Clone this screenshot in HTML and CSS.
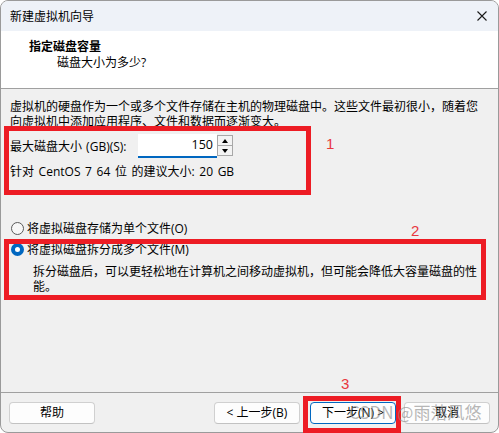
FILE: index.html
```html
<!DOCTYPE html>
<html lang="zh-CN">
<head>
<meta charset="utf-8">
<title>新建虚拟机向导</title>
<link rel="stylesheet" href="styles.css">
</head>
<body>
<div class="page">
  <div class="window">
    <div class="titlebar">
      <span class="title">新建虚拟机向导</span>
      <svg class="close" width="10" height="10" viewBox="0 0 10 10"><path d="M0.5 0.5L9.5 9.5M9.5 0.5L0.5 9.5" stroke="#1a1a1a" stroke-width="1.1" fill="none"/></svg>
    </div>
    <div class="header">
      <div class="h-title">指定磁盘容量</div>
      <div class="h-sub">磁盘大小为多少?</div>
    </div>
    <div class="content">
      <p class="intro">虚拟机的硬盘作为一个或多个文件存储在主机的物理磁盘中。这些文件最初很小，随着您<br>向虚拟机中添加应用程序、文件和数据而逐渐变大。</p>
      <div class="size-row">
        <span class="size-label">最大磁盘大小 (GB)(S):</span>
        <div class="input">150</div>
        <div class="spin"><span class="spin-btn"><i class="arrow-up"></i></span><span class="spin-btn"><i class="arrow-down"></i></span></div>
      </div>
      <div class="recommend">针对 CentOS 7 64 位 的建议大小: 20 GB</div>
      <div class="radio radio-first"><span class="dot"></span>将虚拟磁盘存储为单个文件(O)</div>
      <div class="radio"><span class="dot dot-checked"></span>将虚拟磁盘拆分成多个文件(M)</div>
      <p class="desc">拆分磁盘后，可以更轻松地在计算机之间移动虚拟机，但可能会降低大容量磁盘的性<br>能。</p>
    </div>
    <div class="footer">
      <button class="btn">帮助</button>
      <button class="btn btn-back">&lt; 上一步(B)</button>
      <button class="btn btn-next">下一步(N) &gt;</button>
      <button class="btn btn-cancel">取消</button>
    </div>
  </div>
  <div class="mark box1"></div>
  <div class="mark box2"></div>
  <div class="mark box3"></div>
  <span class="num num1">1</span>
  <span class="num num2">2</span>
  <span class="num num3">3</span>
  <span class="watermark">CSDN @雨落风悠</span>
</div>
</body>
</html>
```

FILE: styles.css
```css
* { box-sizing: border-box; }
html, body { margin: 0; padding: 0; background: #ffffff; }
body {
  font-family: "Open Sans", "Noto Sans CJK SC", sans-serif;
  font-size: 12px;
  color: #000;
}
.page {
  position: relative;
  width: 499px;
  height: 433px;
}
.window {
  width: 499px;
  height: 433px;
  border: 1px solid #9a9a9a;
  border-radius: 8px;
  overflow: hidden;
  display: flex;
  flex-direction: column;
  background: #f0f0f0;
}
.titlebar {
  height: 30px;
  background: #eef2f8;
  display: flex;
  align-items: center;
  justify-content: space-between;
  padding: 0 10px 0 9px;
  flex: none;
}
.title { line-height: 15px; }
.close { display: block; margin-right: 1px; }
.header {
  height: 58px;
  background: #ffffff;
  border-bottom: 1px solid #a0a0a0;
  padding: 8px 0 0 28px;
  flex: none;
}
.h-title { font-weight: bold; line-height: 16px; }
.h-sub { line-height: 16px; padding-left: 28px; }
.content {
  flex: 1;
  padding: 0 9px;
}
.intro {
  margin: 10px 0 0;
  line-height: 15px;
  white-space: nowrap;
}
.size-row {
  margin-top: 5px;
  height: 24px;
  display: flex;
  align-items: center;
}
.size-label { width: 128px; line-height: 15px; white-space: nowrap; word-spacing: 1px; }
.input {
  width: 79px;
  height: 24px;
  background: #ffffff;
  border-bottom: 2px solid #0067c0;
  text-align: right;
  padding-right: 4px;
  line-height: 21px;
  font-size: 12.5px;
}
.spin {
  width: 16px;
  height: 21px;
  display: flex;
  flex-direction: column;
  align-self: flex-start;
  margin-top: 1px;
}
.spin-btn {
  flex: 1;
  border: 1px solid #a8a8a8;
  background: #f3f3f3;
  display: flex;
  align-items: center;
  justify-content: center;
}
.spin-btn + .spin-btn { border-top: none; }
.arrow-up {
  width: 0; height: 0;
  border-left: 3px solid transparent;
  border-right: 3px solid transparent;
  border-bottom: 4px solid #000;
}
.arrow-down {
  width: 0; height: 0;
  border-left: 3px solid transparent;
  border-right: 3px solid transparent;
  border-top: 4px solid #000;
}
.recommend { margin-top: 6px; line-height: 15px; white-space: nowrap; word-spacing: 1.5px; }
.radio {
  display: flex;
  align-items: center;
  line-height: 15px;
  margin-top: 6px;
}
.radio-first { margin-top: 42px; }
.dot {
  width: 13px;
  height: 13px;
  border-radius: 50%;
  border: 1px solid #5a5a5a;
  background: #f7f7f7;
  margin: 0 3px 0 1px;
  flex: none;
}
.dot-checked {
  border: 4px solid #0067c0;
  background: #ffffff;
}
.desc {
  margin: 7px 0 0;
  padding-left: 23px;
  line-height: 15px;
  white-space: nowrap;
}
.footer {
  flex: none;
  height: 40px;
  border-top: 1px solid #a0a0a0;
  padding: 9px 8px 8px 8px;
  display: flex;
}
.btn {
  width: 86px;
  height: 22px;
  border: 1px solid #d0d0d0;
  border-bottom-color: #c2c2c2;
  border-radius: 4px;
  background: #fdfdfd;
  font-family: "Open Sans", "Noto Sans CJK SC", sans-serif;
  font-size: 12px;
  line-height: 18px;
  padding: 0;
  color: #000;
}
.btn-back { margin-left: auto; }
.btn-next { margin-left: 10px; border: 1px solid #0067c0; }
.btn-cancel { margin-left: 8px; }
.mark {
  position: absolute;
  border: 5px solid #ed1c24;
}
.box1 { left: 4px; top: 126px; width: 307px; height: 69px; }
.box2 { left: 4px; top: 239px; width: 482px; height: 61px; }
.box3 { left: 303px; top: 396px; width: 98px; height: 37px; }
.num {
  position: absolute;
  font-family: "Liberation Sans", sans-serif;
  font-size: 15px;
  line-height: 15px;
  color: #e8383f;
}
.num1 { left: 326px; top: 136px; }
.num2 { left: 411px; top: 223px; }
.num3 { left: 341px; top: 376px; }
.watermark {
  position: absolute;
  left: 349px;
  top: 402px;
  font-family: "Noto Sans CJK SC", sans-serif;
  font-size: 17px;
  line-height: 20px;
  color: rgba(135, 135, 135, 0.6);
  white-space: nowrap;
}
```
